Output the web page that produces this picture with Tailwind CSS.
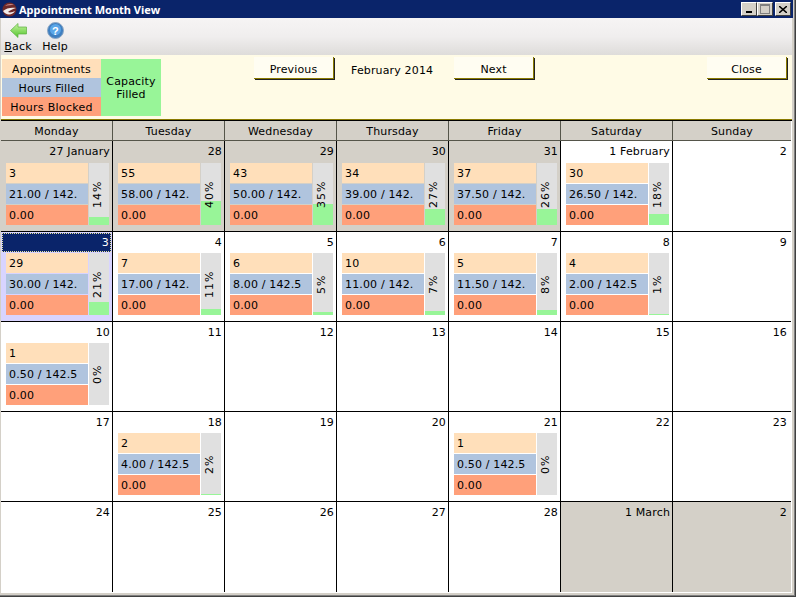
<!DOCTYPE html>
<html><head><meta charset="utf-8"><script src="https://cdn.jsdelivr.net/npm/@tailwindcss/browser@4"></script></head>
<body class="m-0 bg-[#404040] overflow-hidden">
<div class="w-[796px] h-[597px] bg-[#404040] pr-[1px] pb-[1px] overflow-hidden">
<div class="w-[795px] h-[596px] bg-[#808080] pr-[1px] pb-[1px]">
<div class="w-[794px] h-[595px] flex flex-col overflow-hidden bg-[#d4d0c8] font-['DejaVu_Sans','Liberation_Sans',sans-serif] text-[11px] tracking-[0.15px] text-black">
  <div class="h-[18px] shrink-0 bg-[#0a246a] flex items-center pl-[2px] pr-[2px] mr-[1px]">
    <svg width="15" height="15" viewBox="0 0 15 15" class="shrink-0"><circle cx="7.5" cy="7.5" r="7" fill="#6e2a2a"/><path d="M1 9c3-3 9-4 13-3-3 1-6 2-8 4 2 1 5 0 7-1-2 4-9 5-12 0z" fill="#f2ecec"/><path d="M3 4c2-2 6-3 9-1-3 0-6 0-9 1z" fill="#c98a8a"/></svg>
    <span class="ml-[2px] text-white font-bold font-['Noto_Sans'] text-[11px] tracking-normal leading-none">Appointment Month View</span>
    <div class="ml-auto flex items-center">
      <div class="w-[16px] h-[14px] bg-[#d4d0c8] border border-t-white border-l-white border-r-[#404040] border-b-[#404040] relative"><div class="absolute left-[4px] bottom-[2px] w-[6px] h-[2px] bg-black"></div></div>
      <div class="w-[16px] h-[14px] bg-[#d4d0c8] border border-t-white border-l-white border-r-[#404040] border-b-[#404040] flex items-center justify-center"><div class="w-[10px] h-[10px] border border-[#808080] border-t-2"></div></div>
      <div class="ml-[2px] w-[16px] h-[14px] bg-[#d4d0c8] border border-t-white border-l-white border-r-[#404040] border-b-[#404040] flex items-center justify-center"><svg width="8" height="7" viewBox="0 0 8 7"><path d="M0 0l8 7M8 0L0 7" stroke="#000" stroke-width="1.5"/></svg></div>
    </div>
  </div>
  <div class="h-[37px] shrink-0 bg-gradient-to-b from-[#f6f4f4] via-[#f0eeee] to-[#dedcda] flex ml-[1px] mr-[2px]">
    <div class="w-[35px] flex flex-col items-center">
      <svg width="17" height="15" viewBox="0 0 17 15" class="mt-[5px] -ml-[1px]"><defs><linearGradient id="g" x1="0" y1="0" x2="0" y2="1"><stop offset="0" stop-color="#c8f5a0"/><stop offset="1" stop-color="#52c42e"/></linearGradient></defs><path d="M0.5 7.5L8 0.5V4h8.5v7H8v3.5z" fill="url(#g)" stroke="#5cb040" stroke-width="0.7"/></svg>
      <span class="leading-[13px] mt-[2px] -ml-[1px]"><span class="underline">B</span>ack</span>
    </div>
    <div class="w-[40px] flex flex-col items-center">
      <svg width="17" height="17" viewBox="0 0 17 17" class="mt-[4px] -ml-[1px]"><circle cx="8.5" cy="8.5" r="8" fill="#3f7fc0" stroke="#8fa8c4"/><circle cx="8.5" cy="7.5" r="5.5" fill="#5aa6e8"/><text x="8.5" y="12.5" font-size="11" font-weight="bold" fill="#fff" text-anchor="middle" font-family="Liberation Sans">?</text></svg>
      <span class="leading-[13px] mt-[1px] -ml-[2px]">Help</span>
    </div>
  </div>
  <div class="h-[64px] shrink-0 bg-[#fffbe6] ml-[1px] mr-[2px] relative flex items-start">
    <div class="flex mt-[4px] ml-[1px]">
      <div class="w-[99px]">
        <div class="h-[19px] pt-[4px] bg-[#ffdfba] flex items-center justify-center">Appointments</div>
        <div class="h-[19px] pt-[4px] bg-[#b0c4de] flex items-center justify-center">Hours Filled</div>
        <div class="h-[19px] pt-[4px] bg-[#ffa07a] flex items-center justify-center tracking-[0.3px]">Hours Blocked</div>
      </div>
      <div class="w-[60px] h-[57px] bg-[#98f598] flex items-center justify-center text-center leading-[13px]">Capacity<br>Filled</div>
    </div>
    <div class="absolute left-[253px] top-[2px] w-[80px] h-[22px] pt-[6px] bg-[#fffdf2] border-r border-b border-[#8a7a00] shadow-[1px_1px_0_#222] flex items-center justify-center">Previous</div>
    <div class="absolute left-[350px] top-[2px] h-[22px] pt-[6px] flex items-center">February 2014</div>
    <div class="absolute left-[453px] top-[2px] w-[80px] h-[22px] pt-[6px] bg-[#fffdf2] border-r border-b border-[#8a7a00] shadow-[1px_1px_0_#222] flex items-center justify-center">Next</div>
    <div class="absolute left-[706px] top-[2px] w-[80px] h-[22px] pt-[6px] bg-[#fffdf2] border-r border-b border-[#8a7a00] shadow-[1px_1px_0_#222] flex items-center justify-center">Close</div>
  </div>
  <div class="h-[1px] shrink-0 bg-[#8a7a00] ml-[1px] mr-[2px]"></div>
  <div class="h-[1px] shrink-0 bg-black ml-[1px] mr-[2px]"></div>
  <div class="w-[791px] h-[472px] ml-[1px] bg-white border-r border-b border-white grid grid-cols-[112px_112px_112px_112px_112px_112px_118px] grid-rows-[20px_91px_90px_90px_90px_90px]">
    <div class="bg-[#d4d0c8] pt-[4px] border-r border-b border-[#55554a] flex items-center justify-center">Monday</div>
    <div class="bg-[#d4d0c8] pt-[4px] border-r border-b border-[#55554a] flex items-center justify-center">Tuesday</div>
    <div class="bg-[#d4d0c8] pt-[4px] border-r border-b border-[#55554a] flex items-center justify-center">Wednesday</div>
    <div class="bg-[#d4d0c8] pt-[4px] border-r border-b border-[#55554a] flex items-center justify-center">Thursday</div>
    <div class="bg-[#d4d0c8] pt-[4px] border-r border-b border-[#55554a] flex items-center justify-center">Friday</div>
    <div class="bg-[#d4d0c8] pt-[4px] border-r border-b border-[#55554a] flex items-center justify-center">Saturday</div>
    <div class="bg-[#d4d0c8] pt-[4px] border-b border-[#55554a] flex items-center justify-center">Sunday</div>

    <!-- week 1 -->
    <div class="bg-[#d4d0c8] border-r border-b border-black flex flex-col">
      <div class="h-[22px] pt-[4px] pr-[2px] text-right leading-[13px]">27 January</div>
      <div class="flex pl-[5px] gap-[1px]"><div class="w-[82px]"><div class="h-[20px] bg-[#ffdfba] mb-[1px] pl-[3px] pt-[1px] leading-[20px]">3</div><div class="h-[20px] bg-[#b0c4de] mb-[1px] pl-[3px] pt-[1px] leading-[20px]">21.00 / 142.</div><div class="h-[20px] bg-[#ffa07a] pl-[3px] pt-[1px] leading-[20px]">0.00</div></div><div class="w-[20px] h-[62px] bg-[#e0e0e0] relative flex flex-col justify-end"><div class="h-[8px] bg-[#98f598]"></div><div class="absolute inset-0 flex items-center justify-center"><span class="-rotate-90 whitespace-nowrap tracking-[1px]">14%</span></div></div></div>
    </div>
    <div class="bg-[#d4d0c8] border-r border-b border-black flex flex-col">
      <div class="h-[22px] pt-[4px] pr-[2px] text-right leading-[13px]">28</div>
      <div class="flex pl-[5px] gap-[1px]"><div class="w-[82px]"><div class="h-[20px] bg-[#ffdfba] mb-[1px] pl-[3px] pt-[1px] leading-[20px]">55</div><div class="h-[20px] bg-[#b0c4de] mb-[1px] pl-[3px] pt-[1px] leading-[20px]">58.00 / 142.</div><div class="h-[20px] bg-[#ffa07a] pl-[3px] pt-[1px] leading-[20px]">0.00</div></div><div class="w-[20px] h-[62px] bg-[#e0e0e0] relative flex flex-col justify-end"><div class="h-[24px] bg-[#98f598]"></div><div class="absolute inset-0 flex items-center justify-center"><span class="-rotate-90 whitespace-nowrap tracking-[1px]">40%</span></div></div></div>
    </div>
    <div class="bg-[#d4d0c8] border-r border-b border-black flex flex-col">
      <div class="h-[22px] pt-[4px] pr-[2px] text-right leading-[13px]">29</div>
      <div class="flex pl-[5px] gap-[1px]"><div class="w-[82px]"><div class="h-[20px] bg-[#ffdfba] mb-[1px] pl-[3px] pt-[1px] leading-[20px]">43</div><div class="h-[20px] bg-[#b0c4de] mb-[1px] pl-[3px] pt-[1px] leading-[20px]">50.00 / 142.</div><div class="h-[20px] bg-[#ffa07a] pl-[3px] pt-[1px] leading-[20px]">0.00</div></div><div class="w-[20px] h-[62px] bg-[#e0e0e0] relative flex flex-col justify-end"><div class="h-[21px] bg-[#98f598]"></div><div class="absolute inset-0 flex items-center justify-center"><span class="-rotate-90 whitespace-nowrap tracking-[1px]">35%</span></div></div></div>
    </div>
    <div class="bg-[#d4d0c8] border-r border-b border-black flex flex-col">
      <div class="h-[22px] pt-[4px] pr-[2px] text-right leading-[13px]">30</div>
      <div class="flex pl-[5px] gap-[1px]"><div class="w-[82px]"><div class="h-[20px] bg-[#ffdfba] mb-[1px] pl-[3px] pt-[1px] leading-[20px]">34</div><div class="h-[20px] bg-[#b0c4de] mb-[1px] pl-[3px] pt-[1px] leading-[20px]">39.00 / 142.</div><div class="h-[20px] bg-[#ffa07a] pl-[3px] pt-[1px] leading-[20px]">0.00</div></div><div class="w-[20px] h-[62px] bg-[#e0e0e0] relative flex flex-col justify-end"><div class="h-[16px] bg-[#98f598]"></div><div class="absolute inset-0 flex items-center justify-center"><span class="-rotate-90 whitespace-nowrap tracking-[1px]">27%</span></div></div></div>
    </div>
    <div class="bg-[#d4d0c8] border-r border-b border-black flex flex-col">
      <div class="h-[22px] pt-[4px] pr-[2px] text-right leading-[13px]">31</div>
      <div class="flex pl-[5px] gap-[1px]"><div class="w-[82px]"><div class="h-[20px] bg-[#ffdfba] mb-[1px] pl-[3px] pt-[1px] leading-[20px]">37</div><div class="h-[20px] bg-[#b0c4de] mb-[1px] pl-[3px] pt-[1px] leading-[20px]">37.50 / 142.</div><div class="h-[20px] bg-[#ffa07a] pl-[3px] pt-[1px] leading-[20px]">0.00</div></div><div class="w-[20px] h-[62px] bg-[#e0e0e0] relative flex flex-col justify-end"><div class="h-[16px] bg-[#98f598]"></div><div class="absolute inset-0 flex items-center justify-center"><span class="-rotate-90 whitespace-nowrap tracking-[1px]">26%</span></div></div></div>
    </div>
    <div class="border-r border-b border-black flex flex-col">
      <div class="h-[22px] pt-[4px] pr-[2px] text-right leading-[13px]">1 February</div>
      <div class="flex pl-[5px] gap-[1px]"><div class="w-[82px]"><div class="h-[20px] bg-[#ffdfba] mb-[1px] pl-[3px] pt-[1px] leading-[20px]">30</div><div class="h-[20px] bg-[#b0c4de] mb-[1px] pl-[3px] pt-[1px] leading-[20px]">26.50 / 142.</div><div class="h-[20px] bg-[#ffa07a] pl-[3px] pt-[1px] leading-[20px]">0.00</div></div><div class="w-[20px] h-[62px] bg-[#e0e0e0] relative flex flex-col justify-end"><div class="h-[11px] bg-[#98f598]"></div><div class="absolute inset-0 flex items-center justify-center"><span class="-rotate-90 whitespace-nowrap tracking-[1px]">18%</span></div></div></div>
    </div>
    <div class="border-b border-black"><div class="h-[22px] pt-[4px] pr-[4px] text-right leading-[13px]">2</div></div>

    <!-- week 2 -->
    <div class="bg-[#d8d4ff] border-r border-b border-black flex flex-col pt-[1px]">
      <div class="h-[19px] ml-[1px] mr-[1px] bg-[#0a246a] text-white text-right pr-[1px] leading-[18px] border border-dotted border-[#e8e4a0] mb-[1px]">3</div>
      <div class="flex pl-[5px] gap-[1px]"><div class="w-[82px]"><div class="h-[20px] bg-[#ffdfba] mb-[1px] pl-[3px] pt-[1px] leading-[20px]">29</div><div class="h-[20px] bg-[#b0c4de] mb-[1px] pl-[3px] pt-[1px] leading-[20px]">30.00 / 142.</div><div class="h-[20px] bg-[#ffa07a] pl-[3px] pt-[1px] leading-[20px]">0.00</div></div><div class="w-[20px] h-[62px] bg-[#e0e0e0] relative flex flex-col justify-end"><div class="h-[13px] bg-[#98f598]"></div><div class="absolute inset-0 flex items-center justify-center"><span class="-rotate-90 whitespace-nowrap tracking-[1px]">21%</span></div></div></div>
    </div>
    <div class="border-r border-b border-black flex flex-col">
      <div class="h-[21px] pt-[4px] pr-[2px] text-right leading-[13px]">4</div>
      <div class="flex pl-[5px] gap-[1px]"><div class="w-[82px]"><div class="h-[20px] bg-[#ffdfba] mb-[1px] pl-[3px] pt-[1px] leading-[20px]">7</div><div class="h-[20px] bg-[#b0c4de] mb-[1px] pl-[3px] pt-[1px] leading-[20px]">17.00 / 142.</div><div class="h-[20px] bg-[#ffa07a] pl-[3px] pt-[1px] leading-[20px]">0.00</div></div><div class="w-[20px] h-[62px] bg-[#e0e0e0] relative flex flex-col justify-end"><div class="h-[6px] bg-[#98f598]"></div><div class="absolute inset-0 flex items-center justify-center"><span class="-rotate-90 whitespace-nowrap tracking-[1px]">11%</span></div></div></div>
    </div>
    <div class="border-r border-b border-black flex flex-col">
      <div class="h-[21px] pt-[4px] pr-[2px] text-right leading-[13px]">5</div>
      <div class="flex pl-[5px] gap-[1px]"><div class="w-[82px]"><div class="h-[20px] bg-[#ffdfba] mb-[1px] pl-[3px] pt-[1px] leading-[20px]">6</div><div class="h-[20px] bg-[#b0c4de] mb-[1px] pl-[3px] pt-[1px] leading-[20px]">8.00 / 142.5</div><div class="h-[20px] bg-[#ffa07a] pl-[3px] pt-[1px] leading-[20px]">0.00</div></div><div class="w-[20px] h-[62px] bg-[#e0e0e0] relative flex flex-col justify-end"><div class="h-[3px] bg-[#98f598]"></div><div class="absolute inset-0 flex items-center justify-center"><span class="-rotate-90 whitespace-nowrap tracking-[1px]">5%</span></div></div></div>
    </div>
    <div class="border-r border-b border-black flex flex-col">
      <div class="h-[21px] pt-[4px] pr-[2px] text-right leading-[13px]">6</div>
      <div class="flex pl-[5px] gap-[1px]"><div class="w-[82px]"><div class="h-[20px] bg-[#ffdfba] mb-[1px] pl-[3px] pt-[1px] leading-[20px]">10</div><div class="h-[20px] bg-[#b0c4de] mb-[1px] pl-[3px] pt-[1px] leading-[20px]">11.00 / 142.</div><div class="h-[20px] bg-[#ffa07a] pl-[3px] pt-[1px] leading-[20px]">0.00</div></div><div class="w-[20px] h-[62px] bg-[#e0e0e0] relative flex flex-col justify-end"><div class="h-[4px] bg-[#98f598]"></div><div class="absolute inset-0 flex items-center justify-center"><span class="-rotate-90 whitespace-nowrap tracking-[1px]">7%</span></div></div></div>
    </div>
    <div class="border-r border-b border-black flex flex-col">
      <div class="h-[21px] pt-[4px] pr-[2px] text-right leading-[13px]">7</div>
      <div class="flex pl-[5px] gap-[1px]"><div class="w-[82px]"><div class="h-[20px] bg-[#ffdfba] mb-[1px] pl-[3px] pt-[1px] leading-[20px]">5</div><div class="h-[20px] bg-[#b0c4de] mb-[1px] pl-[3px] pt-[1px] leading-[20px]">11.50 / 142.</div><div class="h-[20px] bg-[#ffa07a] pl-[3px] pt-[1px] leading-[20px]">0.00</div></div><div class="w-[20px] h-[62px] bg-[#e0e0e0] relative flex flex-col justify-end"><div class="h-[5px] bg-[#98f598]"></div><div class="absolute inset-0 flex items-center justify-center"><span class="-rotate-90 whitespace-nowrap tracking-[1px]">8%</span></div></div></div>
    </div>
    <div class="border-r border-b border-black flex flex-col">
      <div class="h-[21px] pt-[4px] pr-[2px] text-right leading-[13px]">8</div>
      <div class="flex pl-[5px] gap-[1px]"><div class="w-[82px]"><div class="h-[20px] bg-[#ffdfba] mb-[1px] pl-[3px] pt-[1px] leading-[20px]">4</div><div class="h-[20px] bg-[#b0c4de] mb-[1px] pl-[3px] pt-[1px] leading-[20px]">2.00 / 142.5</div><div class="h-[20px] bg-[#ffa07a] pl-[3px] pt-[1px] leading-[20px]">0.00</div></div><div class="w-[20px] h-[62px] bg-[#e0e0e0] relative flex flex-col justify-end"><div class="h-[1px] bg-[#98f598]"></div><div class="absolute inset-0 flex items-center justify-center"><span class="-rotate-90 whitespace-nowrap tracking-[1px]">1%</span></div></div></div>
    </div>
    <div class="border-b border-black"><div class="h-[21px] pt-[4px] pr-[4px] text-right leading-[13px]">9</div></div>

    <!-- week 3 -->
    <div class="border-r border-b border-black flex flex-col">
      <div class="h-[21px] pt-[4px] pr-[2px] text-right leading-[13px]">10</div>
      <div class="flex pl-[5px] gap-[1px]"><div class="w-[82px]"><div class="h-[20px] bg-[#ffdfba] mb-[1px] pl-[3px] pt-[1px] leading-[20px]">1</div><div class="h-[20px] bg-[#b0c4de] mb-[1px] pl-[3px] pt-[1px] leading-[20px]">0.50 / 142.5</div><div class="h-[20px] bg-[#ffa07a] pl-[3px] pt-[1px] leading-[20px]">0.00</div></div><div class="w-[20px] h-[62px] bg-[#e0e0e0] relative flex flex-col justify-end"><div class="absolute inset-0 flex items-center justify-center"><span class="-rotate-90 whitespace-nowrap tracking-[1px]">0%</span></div></div></div>
    </div>
    <div class="border-r border-b border-black"><div class="pt-[4px] pr-[2px] text-right leading-[13px]">11</div></div>
    <div class="border-r border-b border-black"><div class="pt-[4px] pr-[2px] text-right leading-[13px]">12</div></div>
    <div class="border-r border-b border-black"><div class="pt-[4px] pr-[2px] text-right leading-[13px]">13</div></div>
    <div class="border-r border-b border-black"><div class="pt-[4px] pr-[2px] text-right leading-[13px]">14</div></div>
    <div class="border-r border-b border-black"><div class="pt-[4px] pr-[2px] text-right leading-[13px]">15</div></div>
    <div class="border-b border-black"><div class="pt-[4px] pr-[4px] text-right leading-[13px]">16</div></div>

    <!-- week 4 -->
    <div class="border-r border-b border-black"><div class="pt-[4px] pr-[2px] text-right leading-[13px]">17</div></div>
    <div class="border-r border-b border-black flex flex-col">
      <div class="h-[21px] pt-[4px] pr-[2px] text-right leading-[13px]">18</div>
      <div class="flex pl-[5px] gap-[1px]"><div class="w-[82px]"><div class="h-[20px] bg-[#ffdfba] mb-[1px] pl-[3px] pt-[1px] leading-[20px]">2</div><div class="h-[20px] bg-[#b0c4de] mb-[1px] pl-[3px] pt-[1px] leading-[20px]">4.00 / 142.5</div><div class="h-[20px] bg-[#ffa07a] pl-[3px] pt-[1px] leading-[20px]">0.00</div></div><div class="w-[20px] h-[62px] bg-[#e0e0e0] relative flex flex-col justify-end"><div class="h-[1px] bg-[#98f598]"></div><div class="absolute inset-0 flex items-center justify-center"><span class="-rotate-90 whitespace-nowrap tracking-[1px]">2%</span></div></div></div>
    </div>
    <div class="border-r border-b border-black"><div class="pt-[4px] pr-[2px] text-right leading-[13px]">19</div></div>
    <div class="border-r border-b border-black"><div class="pt-[4px] pr-[2px] text-right leading-[13px]">20</div></div>
    <div class="border-r border-b border-black flex flex-col">
      <div class="h-[21px] pt-[4px] pr-[2px] text-right leading-[13px]">21</div>
      <div class="flex pl-[5px] gap-[1px]"><div class="w-[82px]"><div class="h-[20px] bg-[#ffdfba] mb-[1px] pl-[3px] pt-[1px] leading-[20px]">1</div><div class="h-[20px] bg-[#b0c4de] mb-[1px] pl-[3px] pt-[1px] leading-[20px]">0.50 / 142.5</div><div class="h-[20px] bg-[#ffa07a] pl-[3px] pt-[1px] leading-[20px]">0.00</div></div><div class="w-[20px] h-[62px] bg-[#e0e0e0] relative flex flex-col justify-end"><div class="absolute inset-0 flex items-center justify-center"><span class="-rotate-90 whitespace-nowrap tracking-[1px]">0%</span></div></div></div>
    </div>
    <div class="border-r border-b border-black"><div class="pt-[4px] pr-[2px] text-right leading-[13px]">22</div></div>
    <div class="border-b border-black"><div class="pt-[4px] pr-[4px] text-right leading-[13px]">23</div></div>

    <!-- week 5 -->
    <div class="border-r border-black"><div class="pt-[4px] pr-[2px] text-right leading-[13px]">24</div></div>
    <div class="border-r border-black"><div class="pt-[4px] pr-[2px] text-right leading-[13px]">25</div></div>
    <div class="border-r border-black"><div class="pt-[4px] pr-[2px] text-right leading-[13px]">26</div></div>
    <div class="border-r border-black"><div class="pt-[4px] pr-[2px] text-right leading-[13px]">27</div></div>
    <div class="border-r border-black"><div class="pt-[4px] pr-[2px] text-right leading-[13px]">28</div></div>
    <div class="border-r border-black bg-[#d4d0c8]"><div class="pt-[4px] pr-[2px] text-right leading-[13px]">1 March</div></div>
    <div class="bg-[#d4d0c8]"><div class="pt-[4px] pr-[4px] text-right leading-[13px]">2</div></div>
  </div>
</div>
</div>
</div>
</body></html>
